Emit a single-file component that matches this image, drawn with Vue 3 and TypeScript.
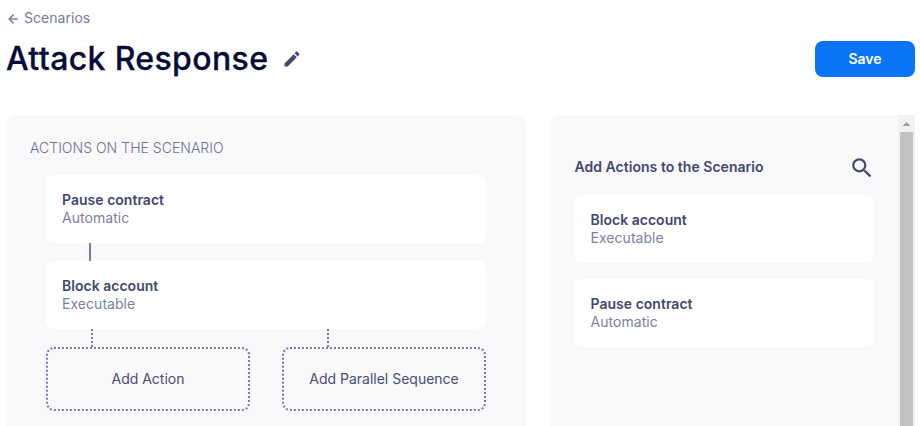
<script setup lang="ts">
interface Action {
  name: string
  kind: string
}

const scenarioActions: Action[] = [
  { name: 'Pause contract', kind: 'Automatic' },
  { name: 'Block account', kind: 'Executable' },
]
const availableActions: Action[] = [
  { name: 'Block account', kind: 'Executable' },
  { name: 'Pause contract', kind: 'Automatic' },
]
const additions: string[] = ['Add Action', 'Add Parallel Sequence']
</script>

<template>
  <div class="page">
    <a class="back">
      <svg class="back-icon" viewBox="0 0 24 24"><path d="M20 11H7.83l5.59-5.59L12 4l-8 8 8 8 1.41-1.41L7.83 13H20v-2z" /></svg>
      <span>Scenarios</span>
    </a>
    <header class="header">
      <h1>Attack Response</h1>
      <svg class="edit-icon" viewBox="0 0 24 24"><path d="M3 17.25V21h3.75L17.81 9.94l-3.75-3.75L3 17.25zM20.71 7.04c.39-.39.39-1.02 0-1.41l-2.34-2.34c-.39-.39-1.02-.39-1.41 0l-1.83 1.83 3.75 3.75 1.83-1.83z" /></svg>
      <button class="save" type="button">Save</button>
    </header>
    <main class="columns">
      <section class="panel scenario">
        <h2 class="caption">ACTIONS ON THE SCENARIO</h2>
        <div class="sequence">
          <template v-for="(action, index) in scenarioActions" :key="action.name">
            <div v-if="index > 0" class="connector"></div>
            <article class="card">
              <div class="name">{{ action.name }}</div>
              <div class="kind">{{ action.kind }}</div>
            </article>
          </template>
          <div class="additions">
            <div v-for="label in additions" :key="label" class="addition">
              <div class="dotted"></div>
              <button class="add" type="button">{{ label }}</button>
            </div>
          </div>
        </div>
      </section>
      <section class="panel library">
        <div class="library-content">
          <div class="library-head">
            <h2 class="library-title">Add Actions to the Scenario</h2>
            <svg class="search-icon" viewBox="0 0 24 24"><path d="M15.5 14h-.79l-.28-.27C15.41 12.59 16 11.11 16 9.5 16 5.91 13.09 3 9.5 3S3 5.91 3 9.5 5.91 16 9.5 16c1.61 0 3.09-.59 4.23-1.57l.27.28v.79l5 4.99L20.49 19l-4.99-5zm-6 0C7.01 14 5 11.99 5 9.5S7.01 5 9.5 5 14 7.01 14 9.5 11.99 14 9.5 14z" /></svg>
          </div>
          <article v-for="action in availableActions" :key="action.name" class="card">
            <div class="name">{{ action.name }}</div>
            <div class="kind">{{ action.kind }}</div>
          </article>
        </div>
        <div class="scrollbar">
          <svg class="scroll-up" viewBox="0 0 17 17" shape-rendering="crispEdges"><path d="M8 7h1v1h1v1h1v1h1v1H5v-1h1V9h1V8h1z" /></svg>
          <div class="thumb"></div>
        </div>
      </section>
    </main>
  </div>
</template>

<style>
body {
  background: #fff;
  overflow: hidden;
}
</style>

<style scoped>
.page {
  box-sizing: border-box;
  width: 920px;
  height: 426px;
  padding: 0 5px 0 6px;
  overflow: hidden;
  display: flex;
  flex-direction: column;
  font-family: Inter, sans-serif;
  font-size: 14px;
  line-height: 18px;
  letter-spacing: 0.04px;
  color: #43476f;
}
h1, h2 {
  margin: 0;
}
svg {
  display: block;
  flex: none;
  fill: currentColor;
}
.back {
  display: flex;
  align-items: center;
  gap: 4px;
  padding-top: 9px;
  color: #777ba1;
}
.back-icon {
  width: 14px;
  height: 14px;
  position: relative;
  top: 1px;
  stroke: currentColor;
  stroke-width: 0.7;
}
.header {
  display: flex;
  align-items: center;
  height: 36px;
  margin-top: 14px;
}
h1 {
  font-size: 32px;
  line-height: 36px;
  font-weight: 500;
  letter-spacing: 0.37px;
  color: #070c38;
  -webkit-text-stroke: 0.3px #070c38;
}
.edit-icon {
  width: 20px;
  height: 20px;
  margin-left: 14px;
}
button {
  font: inherit;
  letter-spacing: inherit;
  padding: 0;
}
.save {
  width: 100px;
  height: 36px;
  margin-left: auto;
  border: 0;
  border-radius: 8px;
  background: #0b74f5;
  color: #fff;
  font-weight: 600;
  letter-spacing: 0;
}
.columns {
  flex: 1;
  display: flex;
  gap: 24px;
  margin-top: 38px;
}
.panel {
  background: #f9f9fb;
  border-radius: 10px 10px 0 0;
}
.scenario {
  box-sizing: border-box;
  width: 520px;
  padding: 24px 40px 0;
}
.caption {
  margin: 0 0 18px -16px;
  font-size: 14px;
  font-weight: 300;
  letter-spacing: 0.02px;
  color: #6d7199;
}
.card {
  box-sizing: border-box;
  height: 68px;
  padding: 16px;
  border-radius: 8px;
  background: #fff;
}
.name {
  font-weight: 600;
  letter-spacing: 0.02px;
}
.kind {
  color: #7b7fa3;
}
.connector {
  width: 2px;
  height: 18px;
  margin-left: 43px;
  background: #777ba1;
}
.additions {
  display: grid;
  grid-template-columns: 1fr 1fr;
  gap: 32px;
}
.dotted {
  height: 18px;
  margin-left: 45px;
  border-left: 2px dotted #777ba1;
}
.add {
  display: block;
  box-sizing: border-box;
  width: 100%;
  height: 64px;
  border: 2px dotted #777ba1;
  border-radius: 8px;
  background: transparent;
  color: #4a4e75;
  letter-spacing: 0;
}
.library {
  display: flex;
  width: 365px;
  border-radius: 10px 0 0 0;
}
.library-content {
  display: flex;
  flex-direction: column;
  gap: 16px;
  flex: 1;
  padding: 40px 24px 0;
}
.library .card {
  padding-left: 16.5px;
}
.library-head {
  display: flex;
  align-items: center;
  justify-content: space-between;
  height: 24px;
  padding-left: 0.5px;
}
.library-title {
  font-size: 14px;
  font-weight: 600;
  letter-spacing: 0.03px;
}
.search-icon {
  width: 26px;
  height: 26px;
  margin: 1px -1px 0 0;
}
.scrollbar {
  display: flex;
  flex-direction: column;
  width: 17px;
  background: #f1f1f1;
}
.scroll-up {
  width: 17px;
  height: 17px;
  color: #a3a3a3;
}
.thumb {
  flex: 1;
  margin: 0 2px;
  background: #c1c1c1;
}
</style>
